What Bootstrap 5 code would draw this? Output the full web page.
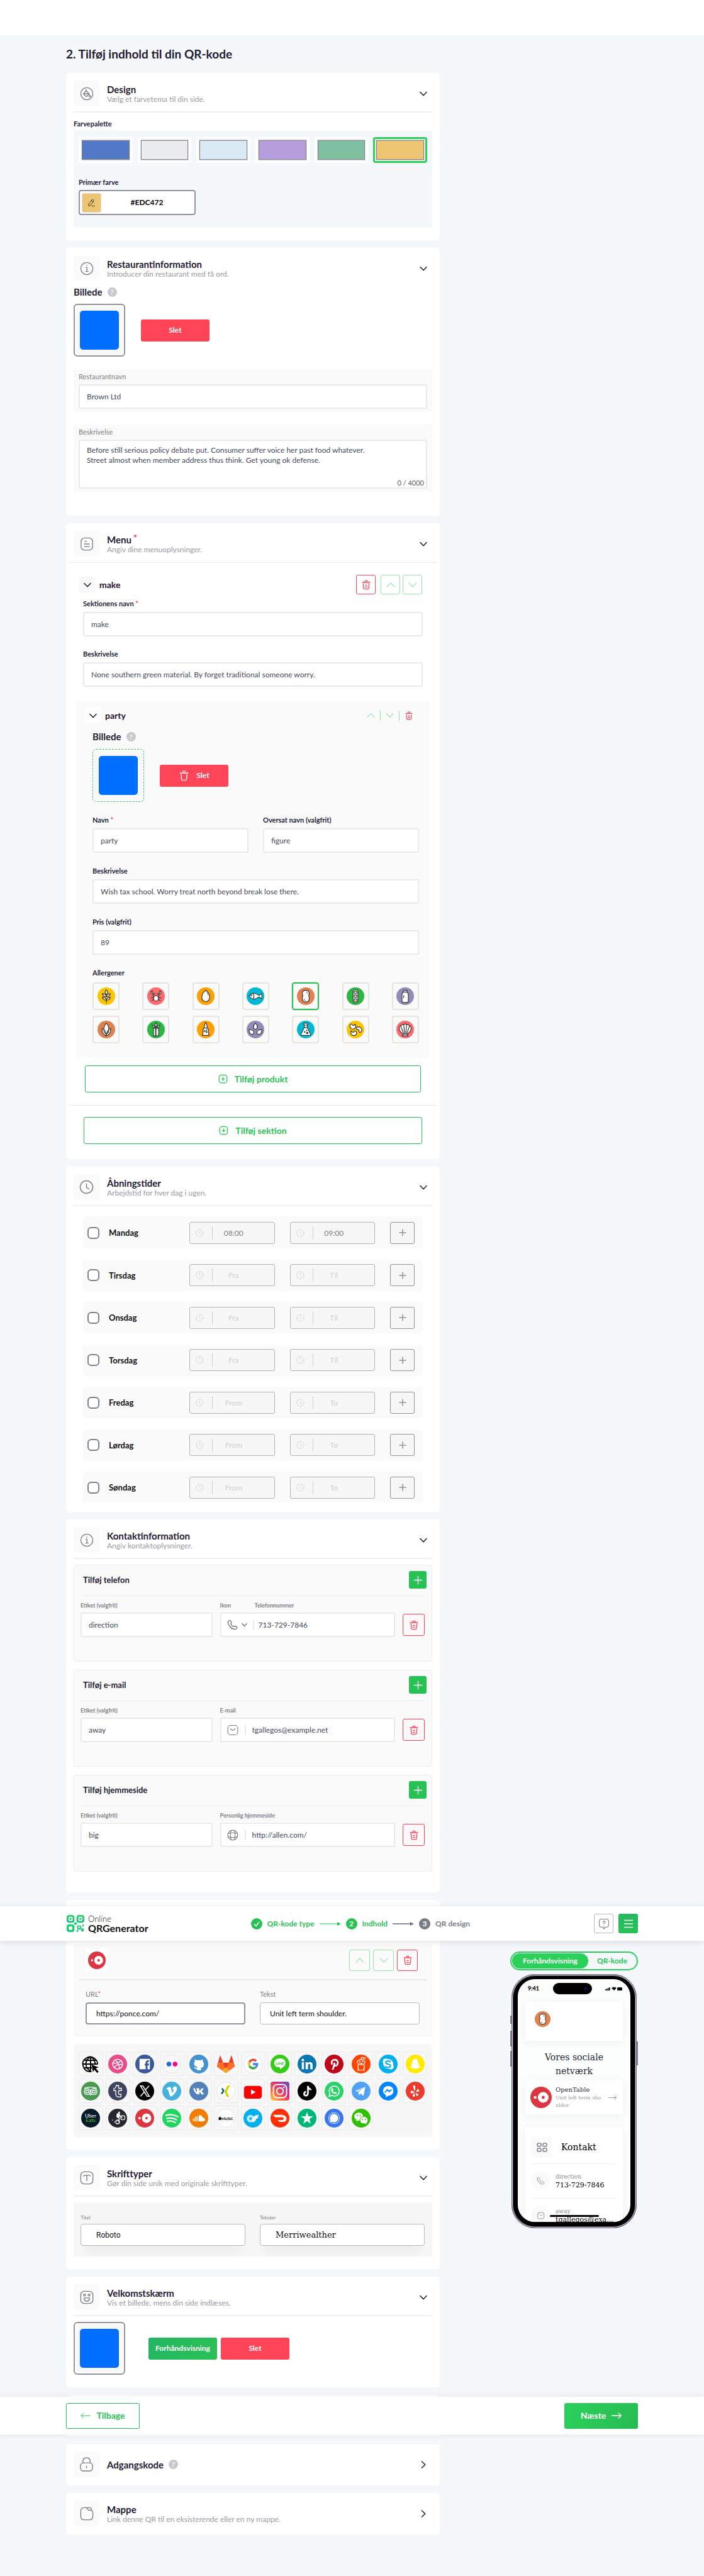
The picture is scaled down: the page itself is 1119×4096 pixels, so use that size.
<!DOCTYPE html>
<html lang="da">
<head>
<meta charset="utf-8">
<meta name="viewport" content="width=device-width, initial-scale=1">
<title>Online QR Generator</title>
<link href="https://cdn.jsdelivr.net/npm/bootstrap@5.3.0/dist/css/bootstrap.min.css" rel="stylesheet">
<style>
:root{--ink:#1f1b33;--grey:#7b8087;--green:#28c254;--bright:#2bcf5a;--red:#ff4457}
body{font-family:Lato,"Open Sans",sans-serif;font-size:11px;line-height:14px;color:var(--ink);background:#f4f8fb}
svg{display:block;flex:none}
.line-icon{fill:none;stroke:currentColor;stroke-width:1.5;stroke-linecap:round;stroke-linejoin:round}
.line-icon.fine{stroke-width:1.1}
.line-icon.bold{stroke-width:2}
.page-wrap{position:relative;min-height:4096px}
.top-strip{height:56px}
.site-width{max-width:909px;margin-inline:auto}
.layout-grid{display:grid;grid-template-columns:minmax(0,594px) 203px;justify-content:space-between}
.page-title{font-size:19px;line-height:24px;font-weight:700;margin:18px 0}
.panel-stack{display:flex;flex-direction:column;gap:12px}
.section-box{background:#fff;border-radius:6px;padding:12px 12px 20px}
.section-box.folded{padding-bottom:13px}
.info-box{padding-bottom:38px}
.menu-box{padding-bottom:24px}
.hours-box{padding-bottom:14px}
.contact-box{padding-bottom:33px}
.links-box{padding-top:70px}
.sec-head{display:flex;align-items:center;gap:12px;height:41px;padding-right:8px}
.sec-icon{width:41px;height:41px;border-radius:4px;background:#fbfbfb;color:var(--grey);display:grid;place-items:center;flex:none}
.sec-title{font-size:15px;line-height:18px;font-weight:700;margin:0}
.sec-title sup{color:#e02437;font-size:14px;top:-4px;margin-left:3px;line-height:1}
.sec-sub{color:#9a9aa4;font-size:12px;margin:0}
.fold-btn{border:0;background:none;padding:0;color:var(--ink);margin-left:auto}
.rule{border:0;opacity:1;margin:8px 0 0;height:2px;background:#f0f0f0}
.rule-wide{border:0;opacity:1;height:1px;background:#e8e8e8;margin:9px -7px 0}
.rule-wide.low{margin-top:20px}
.field-label{display:block;font-weight:700;color:#22243a;line-height:14px;margin:0}
.field-label i{color:var(--red);font-style:normal}
.palette-label{margin-top:11px}
.primary-label{margin-top:24px}
.field-label.soft{font-weight:400;color:var(--grey)}
.field-label.tiny{font-size:9px;line-height:12px;color:var(--grey)}
.field-label.mini{font-size:8px;line-height:12px}
.txt{display:block;width:100%;height:39px;border:2px solid #eaeaea;border-radius:3px;background:#fff;color:#434a5e;padding:0 11px;font-size:12px;outline:0}
.txt.dark-edge{height:35px;border:1px solid #b9b9bd;color:#111;padding:0 15px;border-radius:4px}
.txt.active-edge{border:2px solid #93939d}
textarea.txt{height:78px;padding-top:7px;line-height:16px;resize:none}
.counter{position:absolute;right:13px;bottom:7px;color:#5c6066}
.stack6{display:flex;flex-direction:column;gap:6px}
.stack5{display:flex;flex-direction:column;gap:5px}
.grey-panel{position:relative;background:#fafafa;border-radius:4px;padding:6px 8px 5px;margin-top:19px}
.tint-panel{background:#f4f8fb;border-radius:4px;margin-top:4px;padding:10px 8px 20px}
.swatches{display:grid;grid-template-columns:repeat(6,1fr);gap:8px}
.swatch{height:41px;background:#fff;border:0;border-radius:4px;padding:3px 4px}
.swatch span{display:block;height:100%;border:solid #e6e6ea;border-width:2px 1px}
.swatch b{display:block;height:100%;border:1px solid #808080}
.swatch.picked{border:3px solid var(--bright);padding:0 1px}
.hex-box{width:186px;height:40px;border:2px solid #93939d;border-radius:4px;background:#fff;display:flex;align-items:center;padding:3px;margin-top:5px}
.hex-chip{width:31px;height:31px;border:1px solid #ddd;border-radius:3px;background:#edc472;display:grid;place-items:center;padding:0;color:#222}
.hex-box input{border:0;outline:0;flex:1;min-width:0;text-align:center;font-weight:700;font-size:12px;color:#000;background:none}
.img-title{font-size:15px;line-height:18px;font-weight:700;margin:8px 0 0;display:flex;align-items:center;gap:8px}
.help-dot{width:15px;height:15px;border-radius:50%;background:#c9c8cf;color:#fff;font-size:12px;line-height:15px;text-align:center;display:inline-block;font-weight:400}
.img-row{display:flex;align-items:center;gap:25px;margin-top:10px}
.welcome-row{display:flex;align-items:center;gap:6px;margin-top:9px}
.welcome-row .img-frame{margin-right:31px}
.img-frame{width:82px;height:84px;border:2px solid #93939d;border-radius:6px;background:#f8f8f8;padding:8px;display:grid;box-shadow:inset 0 0 0 2px #fff}
.img-frame span{background:#006fff;border-radius:5px;margin:1px 0}
.img-frame.dashed{border:1px dashed #3cc766;padding:9px}
.pill-btn{width:109px;height:35px;border:0;border-radius:3px;background:var(--red);color:#fff;font-weight:700;font-size:12px;padding:0;display:flex;align-items:center;justify-content:center;gap:11px}
.pill-btn.go{background:linear-gradient(120deg,#25b564,#2bc154)}
.mini-fold{width:25px;height:25px;background:#f8f8f8;border:0;padding:0;display:grid;place-items:center;color:var(--ink)}
.course-bar{display:flex;align-items:center;margin-top:19px;padding:0 16px 0 9px}
.course-fields{padding:8px 15px 0;display:flex;flex-direction:column;gap:21px}
.sq{width:31px;height:31px;border:1px solid #96e3ac;border-radius:3px;background:#fff;color:#96e3ac;padding:0;display:grid;place-items:center}
.sq.del{border-color:var(--red);color:var(--red)}
.sq.tall{width:33px;height:34px;background:#fbfbfb}
.sq.wide{width:35px;height:35px;background:#fdf9fa}
.sq.plain{border-color:#b9b9bd;color:var(--grey)}
.sq.burger{border:0;background:linear-gradient(#27b862,#28c254)}
.item-name{font-size:14px;line-height:18px;font-weight:700;color:#2a1030;margin:0 0 0 7px}
.dish{background:#fafafa;border-radius:4px;margin:22px 4px 0;padding:11px 17px 22px 26px}
.dish-bar{height:25px;margin-left:-12px;padding-right:9px;display:flex;align-items:center}
.dish .img-title{margin-top:12px}
.dish .img-row{margin-top:11px}
.dish-fields{display:flex;flex-direction:column;gap:22px;margin-top:22px}
.ghost{border:0;background:none;padding:0;color:#96e3ac}
.ghost.del{color:var(--red)}
.bar{width:1px;height:16px;background:#8fdfa6}
.allergens{display:flex;flex-wrap:wrap;justify-content:space-between;row-gap:9px;column-gap:36px;margin-top:8px}
.allergens button{width:43px;height:44px;border:2px solid #e6e6de;border-radius:4px;background:#fafafa;padding:0;display:grid;place-items:center}
.allergens button.picked{border-color:var(--green);outline:1px solid #e6e6de}
.wide-btn{height:43px;border:1px solid var(--green);border-radius:3px;background:#fff;color:var(--green);font-size:14px;font-weight:700;display:flex;align-items:center;justify-content:center;gap:11px;padding:0}
.add-dish{display:grid;margin:13px 18px 0}
.add-course{display:grid;margin:18px 16px 0}
.days{display:flex;flex-direction:column;justify-content:space-between;min-height:455px;margin:17px 15px 0}
.day{height:50px;background:#fafafa;border-radius:5px;display:grid;grid-template-columns:138px minmax(0,1fr) minmax(0,1fr) 39px;column-gap:24px;align-items:center;padding:0 13px 0 7px}
.day-name{display:flex;align-items:center;gap:15px;font-size:13px;font-weight:700;color:#111}
.day-name .form-check-input{width:19px;height:19px;border:2px solid #7c828b;border-radius:6px;margin:0;flex:none;background-color:#fff}
.day-time{height:35px;border:1px solid #b4b4b6;border-radius:3px;background:#f7f7f7;color:#cfcfd1;display:flex;align-items:center;padding-left:9px}
.day-time input{border:0;border-left:1px solid #cfcfd1;background:none;height:21px;flex:1;min-width:0;margin-left:13px;padding:0 31px 0 0;text-align:center;color:#7e7e80;font-size:12px}
.day-time input::placeholder{color:#cfcfd1;opacity:1}
.day-add{width:39px;height:35px;border:1px solid #92929a;border-radius:3px;background:#f7f7f7;color:#92929a;padding:0;display:grid;place-items:center}
.contact{border:1px solid #ededed;border-radius:3px;background:#fafafa;padding:9px 11px 38px 10px}
.rule+.contact{margin-top:9px}
.contact+.contact{margin-top:13px}
.contact-top{display:flex;justify-content:space-between;align-items:center;margin-right:-3px;padding-left:4px;height:28px}
.contact-top h3{font-size:13px;line-height:18px;margin:0;font-weight:700}
.add-btn{width:28px;height:28px;border:0;border-radius:3px;background:var(--green);color:#fff;padding:0;display:grid;place-items:center}
.thin-rule{border:0;opacity:1;height:1px;background:#ededed;margin:11px 1px 9px 2px}
.contact-grid{display:grid;grid-template-columns:210fr 279fr 35px;column-gap:12px;align-items:end}
.contact-grid .sq{margin-bottom:2px}
.combo{height:39px;border:2px solid #eaeaea;border-radius:3px;background:#fff;display:flex;align-items:center;color:var(--grey);padding-left:9px}
.combo input{border:0;outline:0;flex:1;min-width:0;height:24px;font-size:12px;color:#434a5e;background:none;padding:0}
.combo .split{width:2px;height:16px;background:#eaeaea;margin:0 10px}
.combo.dial{color:#4b5060}
.combo.dial .split{margin:0 7px 0 9px}
.combo.dial svg+svg{margin-left:6px}
.icon-label{width:55px}
.link-panel{background:#fafafa;border-radius:4px;padding:8px 20px 20px 19px}
.link-bar{display:flex;align-items:center;gap:5px;padding-right:3px}
.link-tile{width:36px;height:36px;background:#fff;border-radius:4px;display:grid;place-items:center;margin-right:auto}
.link-panel .rule{margin:12px -12px 0 -11px;background:#eaeaea}
.link-panel .two-col{margin-top:15px}
.two-col{display:grid;grid-template-columns:1fr 1fr;column-gap:23px}
.social-panel{background:#f7f7f7;border-radius:4px;margin-top:11px;padding:12px 8px 11px}
.socials{display:grid;grid-template-columns:repeat(13,1fr);gap:4px}
.socials button{height:39px;border:1px solid #ececec;border-radius:3px;background:#f7f7f7;padding:0;display:grid;place-items:center}
.font-panel{background:#f7f7f7;border-radius:3px;margin-top:9px;padding:18px 12px 17px 11px}
.font-panel .txt{padding-left:24px;margin-top:4px;box-shadow:0 18px 14px -6px rgba(0,0,0,.04)}
.txt.in-roboto{font-family:Roboto,sans-serif;font-size:12px}
.txt.in-serif{font-family:"DejaVu Serif",serif;font-size:13px}
.nav-strip{position:absolute;left:0;right:0;top:3031px;background:#fff;box-shadow:0 2px 10px rgba(30,40,60,.13)}
.nav-strip .site-width{height:55px;display:flex;align-items:center;padding-left:1px}
.brand{display:flex;align-items:center;gap:6px;color:#111;text-decoration:none}
.brand b{display:block;font-size:16px;line-height:16px}
.brand em{display:block;font-style:normal;font-size:13px;line-height:14px;font-weight:300}
.steps{display:flex;align-items:center;gap:8px;color:var(--green);font-size:12px;font-weight:700;margin:0 auto;padding:0 34px 0 0;list-style:none}
.steps a{color:inherit;text-decoration:none;display:flex;align-items:center;gap:8px}
.steps .later{color:#777c85}
.num{width:18px;height:18px;border-radius:50%;background:var(--green);color:#fff;font-size:12px;line-height:18px;text-align:center;display:grid;place-items:center}
.later .num{background:#777c85}
.foot-strip{position:absolute;left:0;right:0;top:3811px;background:#fff;box-shadow:0 0 9px rgba(30,40,60,.1)}
.foot-strip .site-width{height:60px;display:flex;justify-content:space-between;align-items:center}
.foot-btn{width:117px;height:41px;border:1px solid var(--green);border-radius:3px;background:#fff;color:var(--green);font-size:14px;font-weight:700;display:flex;align-items:center;justify-content:center;gap:9px;padding:0}
.foot-btn.next{border:0;background:linear-gradient(120deg,#2bd15b,#28bb52);color:#fff}
.preview{padding-top:3047px}
.toggle-pill{height:30px;border:2px solid var(--bright);border-radius:15px;display:flex;padding:1px;margin-bottom:6px}
.toggle-pill button{border:0;border-radius:13px;background:none;flex:1;color:var(--green);font-weight:700;font-size:12px;padding:0}
.toggle-pill button.on{background:var(--bright);color:#fff;flex:0 0 121px}
.handset{position:relative;height:404px;margin:0 2px;border:1px solid #6b6076;border-radius:37px;background:#000;padding:7px 9px 9px;box-shadow:inset 0 0 0 1px #d9d4de,inset 0 0 0 2px #4b4157}
.side-key{position:absolute;width:2px;background:#857a90;left:-3px;height:25px}
.side-key.k1{top:65px;height:13px}
.side-key.k2{top:89px}
.side-key.k3{top:121px}
.side-key.k4{top:106px;height:38px;left:auto;right:-3px}
.screen{position:relative;height:100%;border-radius:27px;background:#fcfdfd;overflow:hidden;padding:0 12px;font-family:"DejaVu Serif","Liberation Serif",serif;color:#1f2937}
.status{height:36px;padding:7px 0 0 4px;display:flex;justify-content:space-between;align-items:start;font:900 9px/16px Lato,sans-serif;color:#000}
.island{position:absolute;left:56px;top:6px;width:62px;height:18px;border-radius:9px;background:#000}
.island i{position:absolute;right:7px;top:6px;width:6px;height:6px;border-radius:50%;background:#0b0b45}
.home-bar{position:absolute;left:51px;bottom:8px;width:78px;height:3px;border-radius:2px;background:#000}
.mob-card{background:#fff;box-shadow:0 3px 14px rgba(40,70,60,.06)}
.mob-top{height:62px;padding:15px 0 0 15px}
.mob-title{font-size:14px;line-height:22px;font-weight:400;text-align:center;margin:15px 0 4px}
.mob-link{height:54px;padding:0 10px 0 8px;display:flex;align-items:center;gap:6px}
.mob-link div{width:76px;word-break:break-all}
.mob-link strong{display:block;font-weight:400;font-size:10px;line-height:14px}
.mob-link small{display:block;font-size:8px;line-height:12px;color:#999}
.mob-link .line-icon{margin-left:auto;color:var(--grey)}
.mob-contact{margin-top:20px;padding:15px 9px 30px}
.mob-head{display:flex;align-items:center;gap:14px;padding-bottom:9px;font-size:14px;color:#000}
.mob-square{width:34px;height:34px;border-radius:3px;background:#fafafa;display:grid;place-items:center;color:var(--grey)}
.mob-row{display:flex;align-items:center;gap:8px;padding:11px 0 12px;border-top:1px solid #efefef}
.mob-row span{display:block;font-size:9px;line-height:14px;color:#888}
.mob-row b{display:block;font-weight:400;font-size:11px;line-height:14px;color:#000}
.mob-dot{width:31px;height:31px;border-radius:50%;background:#fafafa;display:grid;place-items:center;color:var(--grey);flex:none}
</style>
</head>
<body>
<svg width="0" height="0" class="position-absolute" aria-hidden="true">
<defs>
<linearGradient id="insta" x1="0" y1="1" x2="1" y2="0"><stop offset="0" stop-color="#fd5"/><stop offset=".3" stop-color="#ff6a3a"/><stop offset=".6" stop-color="#d6307a"/><stop offset="1" stop-color="#5b4fd0"/></linearGradient>
<linearGradient id="mint" x1="0" y1="0" x2="0" y2="1"><stop offset="0" stop-color="#25d366"/><stop offset="1" stop-color="#1ebd8a"/></linearGradient>
<symbol id="i-down" viewBox="0 0 12 12"><path d="M1 3.500 6 8.700 11 3.500"/></symbol>
<symbol id="i-up" viewBox="0 0 12 12"><path d="M1 8.500 6 3.300 11 8.500"/></symbol>
<symbol id="i-right" viewBox="0 0 12 12"><path d="M3.500 1 8.700 6 3.500 11"/></symbol>
<symbol id="i-plus" viewBox="0 0 12 12"><path d="M6 1v10M1 6h10"/></symbol>
<symbol id="i-trash" viewBox="0 0 24 24"><path d="M3 6h18M8.500 5.500 9 3.500Q9.300 2 11 2h2q1.700 0 2 1.500l.5 2M5 9l.8 10.500Q6 22 8.500 22h7q2.500 0 2.700-2.500L19 9M10 12.500h4M9.500 17h5"/></symbol>
<symbol id="i-trash2" viewBox="0 0 24 24"><path d="M3 6h18M9 2h6M5.500 9l.8 10.500Q6.500 22 9 22h6q2.500 0 2.700-2.500L18.500 9"/></symbol>
<symbol id="i-info" viewBox="0 0 24 24"><circle cx="12" cy="12" r="10.500"/><path d="M10.300 10.200H12.200V17M10 17h4.400M12 6.600v.4"/></symbol>
<symbol id="i-clock" viewBox="0 0 24 24"><circle cx="12" cy="12" r="10.500"/><path d="M12 6.500v6.200l4 2.300"/></symbol>
<symbol id="i-drop" viewBox="0 0 24 24"><circle cx="12" cy="12" r="10.500"/><path d="M10.800 5v3M10.800 6.800 15.800 12q.6.7 0 1.300L11.800 16.500q-.9.600-1.700 0L6.500 13q-.6-.7 0-1.400zM6.500 12.300h9.500M17.300 14.500q-2.200 3 0 3t0-3z"/></symbol>
<symbol id="i-doc" viewBox="0 0 24 24"><rect x="2" y="1.500" width="20" height="21" rx="6"/><path d="M8.500 7.500h3M8 12h8.500M8 16.500h8.500"/></symbol>
<symbol id="i-type" viewBox="0 0 24 24"><rect x="1.500" y="1.500" width="21" height="21" rx="6"/><path d="M6.500 9V8.500q0-1 1-1h9q1 0 1 1V9M12 7.500V17"/></symbol>
<symbol id="i-smile" viewBox="0 0 24 24"><rect x="1.500" y="1.500" width="21" height="21" rx="6"/><circle cx="8" cy="8" r="1.700"/><circle cx="16" cy="8" r="1.700"/><path d="M7.300 13h9.400v1.500q-.5 4-4.700 4t-4.700-4z"/></symbol>
<symbol id="i-lock" viewBox="0 0 24 24"><rect x="2" y="9.500" width="20" height="13.500" rx="5"/><path d="M6 9.500V7q0-6 6-6t6 6v2.500M12 15v3"/></symbol>
<symbol id="i-folder" viewBox="0 0 24 24"><path d="M15 6H20.500Q22.500 8 22.500 10v6q0 6.500-6 6.500h-9q-6 0-6-6V7.500q0-6 6-6H17q3 0 3.500 4.500M10 1.500q2 0 3.500 2.500t2.500 2"/></symbol>
<symbol id="i-phone" viewBox="0 0 24 24"><path d="M2 5.500Q2 4 4 2.700 6 1.300 7.300 3L9.500 6.200q.8 1.300-.3 2.500-1.300 1.300-.4 2.600 2 3 4.700 4.500 1.200.6 2.300-.5 1.200-1.200 2.600-.4l3 2q1.500 1.200.3 2.800-2 2.800-4.200 2.500Q11 21.500 6.500 16.500 2 11.500 2 5.500z"/></symbol>
<symbol id="i-mail" viewBox="0 0 24 24"><rect x="1.500" y="2" width="21" height="20" rx="6"/><path d="M7 9l3.300 2.600q1.700 1.200 3.400 0L17 9"/></symbol>
<symbol id="i-globe" viewBox="0 0 24 24"><circle cx="12" cy="12" r="10.500"/><path d="M8.500 2.200Q5.500 12 8.500 21.800M15.500 2.200q3 9.800 0 19.600M2.200 8.500q9.800-3 19.600 0M2.200 15.500q9.800 3 19.600 0"/></symbol>
<symbol id="i-add" viewBox="0 0 24 24"><rect x="2" y="2" width="20" height="20" rx="6"/><path d="M12 8v8M8 12h8"/></symbol>
<symbol id="i-pen" viewBox="0 0 24 24"><path d="M4 15.500 12.500 4q2-2.500 4.500-.7t.8 4.200L9.500 19Q6 22.500 3 21q0-3 1-5.500M11.500 5.500q1 3 4.800 4M13 21.500h8"/></symbol>
<symbol id="i-arrow" viewBox="0 0 24 14"><path d="M1 7h22M17 1l6 6-6 6"/></symbol>
<symbol id="i-back" viewBox="0 0 24 14"><path d="M23 7H1M7 1 1 7l6 6"/></symbol>

<symbol id="a-gluten" viewBox="0 0 36 36"><circle cx="18" cy="18" r="18" fill="#fdc500"/><g fill="#fff" stroke="#333" stroke-width="1.500"><path d="M18 5q-5 5 0 10 5-5 0-10zM10 13q1 6 8 6-1-6-8-6zM26 13q-1 6-8 6 1-6 8-6zM10 20q1 6 8 6-1-6-8-6zM26 20q-1 6-8 6 1-6 8-6z"/><path d="M18 24v8"/></g></symbol>
<symbol id="a-crab" viewBox="0 0 36 36"><circle cx="18" cy="18" r="18" fill="#ff6b6b"/><g fill="#fff" stroke="#333" stroke-width="1.500"><path d="M10 7q-4 3-1 6t6 0l-4-1zM26 7q4 3 1 6t-6 0l4-1z"/><path d="M11 15l3 4M25 15l-3 4M13 21H8M23 21h5M14 24l-5 3M22 24l5 3" fill="none"/><ellipse cx="18" cy="22.500" rx="5" ry="5.500"/></g></symbol>
<symbol id="a-egg" viewBox="0 0 36 36"><circle cx="18" cy="18" r="18" fill="#ff9f00"/><path d="M18 6q8 5 8 14t-8 9q-8 0-8-9T18 6z" fill="#fff" stroke="#333" stroke-width="1.500"/><path d="M20 10q3 2 3 6" fill="none" stroke="#333"/></symbol>
<symbol id="a-fish" viewBox="0 0 36 36"><circle cx="18" cy="18" r="18" fill="#00b8d4"/><path d="M5 18q9-11 20-1.500l6-3.500v10l-6-3.500Q14 29 5 18z" fill="#fff" stroke="#333" stroke-width="1.500"/><path d="M13 13q4 5 0 10" fill="none" stroke="#333" stroke-width="1.500"/><circle cx="9.500" cy="17" r="1.200"/></symbol>
<symbol id="a-peanut" viewBox="0 0 36 36"><circle cx="18" cy="18" r="18" fill="#e0814e"/><path d="M18 6q7 0 7 6 0 3-1 5 2 4 1 8-2 5-7 5t-7-5q-1-4 1-8-1-2-1-5 0-6 7-6z" fill="#fff" stroke="#333" stroke-width="1.500"/><path d="M19 9q3 1 3 4M14 23q0 4 4 4" fill="none" stroke="#333"/></symbol>
<symbol id="a-pea" viewBox="0 0 36 36"><circle cx="18" cy="18" r="18" fill="#2bb741"/><g fill="#fff" stroke="#333" stroke-width="1.500"><rect x="13" y="4.500" width="10" height="27" rx="5"/><circle cx="18" cy="10" r="2.800"/><circle cx="18" cy="18" r="2.800"/><circle cx="18" cy="26" r="2.800"/></g></symbol>
<symbol id="a-milk" viewBox="0 0 36 36"><circle cx="18" cy="18" r="18" fill="#938bb8"/><path d="M14 6h8v4q2.500 2 2.500 5v13q0 3-3 3h-7q-3 0-3-3V15q0-3 2.500-5zM14 9.500h8M15 16v6" fill="#fff" stroke="#333" stroke-width="1.500"/></symbol>
<symbol id="a-corn" viewBox="0 0 36 36"><circle cx="18" cy="18" r="18" fill="#e0814e"/><g fill="#fff" stroke="#333" stroke-width="1.500"><path d="M18 5q5 5 5 13t-5 9q-5-1-5-9t5-13zM9 16q8 2 9 15-9-3-9-15zM27 16q-8 2-9 15 9-3 9-15z"/></g></symbol>
<symbol id="a-celery" viewBox="0 0 36 36"><circle cx="18" cy="18" r="18" fill="#2bb741"/><g fill="#fff" stroke="#333" stroke-width="1.500"><path d="M18 4q-4 4 0 9 4-5 0-9zM10 9q0 5 6 6-1-5-6-6zM26 9q0 5-6 6 1-5 6-6zM13 16q-1 8 0 15h4V14zM23 16q1 8 0 15h-6V14z"/><path d="M18 14v17"/></g></symbol>
<symbol id="a-mustard" viewBox="0 0 36 36"><circle cx="18" cy="18" r="18" fill="#ff9f00"/><path d="M17 4h2l2 8v3h-6v-3zM14 15h8q3 4 1 8l2 7H11l2-7q-2-4 1-8z" fill="#fff" stroke="#333" stroke-width="1.500"/><circle cx="16" cy="21" r="1.500"/><circle cx="20" cy="19" r="1.200"/><circle cx="19.500" cy="23" r="1.500"/></symbol>
<symbol id="a-sesame" viewBox="0 0 36 36"><circle cx="18" cy="18" r="18" fill="#938bb8"/><g fill="#fff" stroke="#333" stroke-width="1.500"><path d="M18 5q6 6 3 11-3 3-6 0-3-5 3-11zM5 18q8 0 10 5 0 5-4 5-6 0-6-10zM31 18q-8 0-10 5 0 5 4 5 6 0 6-10z"/></g></symbol>
<symbol id="a-flask" viewBox="0 0 36 36"><circle cx="18" cy="18" r="18" fill="#00b8d4"/><path d="M14 5h8v3h-1v6l7 14q0 2-2 2H10q-2 0-2-2l7-14V8h-1zM15 9h6M15 14h6" fill="#fff" stroke="#333" stroke-width="1.500"/><circle cx="16" cy="23" r="1.400"/><circle cx="20" cy="20" r="1.300"/><circle cx="21" cy="25" r="2"/></symbol>
<symbol id="a-soy" viewBox="0 0 36 36"><circle cx="18" cy="18" r="18" fill="#fdc500"/><g fill="#fff" stroke="#333" stroke-width="1.500"><path d="M8 7q-3 4 0 8t8 1q5-5 1-9-2 4-5 2-1-3-4-2zM20 14q-1 4 4 4 2 0 1 4 2 4 5 0 3-5-2-8-4-3-8 0zM9 21q-2 5 2 8t8 0q3-4 0-7-3-3-4 1-3 2-6-2z"/></g></symbol>
<symbol id="a-shell" viewBox="0 0 36 36"><circle cx="18" cy="18" r="18" fill="#ff6b6b"/><path d="M14 28Q4 20 6 13q5-6 12-6t12 6q2 7-8 15l2 3H12zM15 27 9 11M17 27l-2-19M19 27l2-19M21 27l6-16M13 28h10" fill="#fff" stroke="#333" stroke-width="1.500"/></symbol>

<symbol id="s-web" viewBox="0 0 40 40"><g fill="none" stroke="#000" stroke-width="2.500"><path d="M22 36q-14 1-17.500-11T9 9q7-7 16-3t10 14M20 4.500v31M4 20h31M7 12h26M7 28h16M19 5q-9 6-9 15t10 15M21 5q8 5 9 16"/></g><path d="M22 21l15 6-6 2 6 7-3 3-6-7-3 5z"/></symbol>
<symbol id="s-dribbble" viewBox="0 0 40 40"><circle cx="20" cy="20" r="20" fill="#ea4c89"/><g fill="none" stroke="#fff" stroke-width="2"><circle cx="20" cy="20" r="10.500"/><path d="M15 11q8 8 9 18M10 18q12 1 17-5.500M13 27q5-8 17.500-6"/></g></symbol>
<symbol id="s-facebook" viewBox="0 0 40 40"><circle cx="20" cy="20" r="20" fill="#3b5998"/><path d="M10 9h20q1 0 1 1v20q0 1-1 1h-4v-8h3v-4h-3v-2q0-2 3-2v-3q-7-1-7 5v2h-2v4h2v8H10q-1 0-1-1V10q0-1 1-1z" fill="#fff"/></symbol>
<symbol id="s-flickr" viewBox="0 0 40 40"><circle cx="20" cy="20" r="19.500" fill="#f8f8fa" stroke="#ddd"/><circle cx="14" cy="20" r="5" fill="#1f69e0"/><circle cx="27" cy="20" r="5" fill="#ff0084"/></symbol>
<symbol id="s-github" viewBox="0 0 40 40"><circle cx="20" cy="20" r="20" fill="#4493d0"/><path d="M12 10l4 2q4-1 8 0l4-2q1 2 .5 4.500 3 3 2 8-1 5-6.500 5.500 1 1 1 4v1h-9v-3q-5 1-6-4l3 1q1 2 3 1l1-2q-6-1-7-6-.5-4 1.500-5.500Q11 12 12 10z" fill="#fff"/></symbol>
<symbol id="s-gitlab" viewBox="0 0 40 40"><path d="M20 39 1 25 8 1l6 16h12L32 1l7 24z" fill="#e24329"/><path d="M20 39 1 25l3-8h10zM20 39l19-14-3-8H26z" fill="#fc6d26"/><path d="M20 39 12 33l8-7 8 7z" fill="#fca326"/></symbol>
<symbol id="s-google" viewBox="0 0 40 40"><circle cx="20" cy="20" r="19.500" fill="#fff" stroke="#ddd"/><g fill="none" stroke-width="4.500"><path d="M27 13.500Q23 10 18.500 11 14 12.500 12.500 16" stroke="#ea4335"/><path d="M12.500 16Q11 20 12.500 24" stroke="#fbbc05"/><path d="M12.500 24q3 5.500 9 5 3-.5 5-2.500" stroke="#34a853"/><path d="M26.500 26.500Q29 24 29 20h-9" stroke="#4285f4"/></g></symbol>
<symbol id="s-line" viewBox="0 0 40 40"><circle cx="20" cy="20" r="20" fill="#36cb17"/><path d="M20 8q12 0 12 10 0 6-12 13v-4Q8 27 8 18 8 8 20 8z" fill="#fff"/><text x="20" y="21" font-size="8" font-weight="900" text-anchor="middle" fill="#36cb17">LINE</text></symbol>
<symbol id="s-linkedin" viewBox="0 0 40 40"><circle cx="20" cy="20" r="20" fill="#0a77b5"/><path d="M9 16h4.500v15H9zM17 16h4v2q5-5 10 0 1 2 1 13h-5v-8q0-4-3-3-2 0-2 3v8h-5z" fill="#fff"/><circle cx="11.200" cy="11.500" r="2.700" fill="#fff"/></symbol>
<symbol id="s-pinterest" viewBox="0 0 40 40"><circle cx="20" cy="20" r="20" fill="#bd081c"/><path d="M17 32q3-7 4-15M16 21q-4-8 4-10 7-1 8 6-1 9-8 5" fill="none" stroke="#fff" stroke-width="3.500"/></symbol>
<symbol id="s-reddit" viewBox="0 0 40 40"><circle cx="20" cy="20" r="20" fill="#ff4500"/><g fill="none" stroke="#fff" stroke-width="1.600"><ellipse cx="20" cy="16" rx="8" ry="5.500"/><path d="M20 10l1-4 5 1M14 21q-2 6 1 12h10q3-6 1-12M16 33h-4M24 33h4M17 18q3 2 6 0"/><circle cx="27" cy="7.500" r="1.500"/></g><circle cx="17" cy="15" r="1.500" fill="#fff"/><circle cx="23" cy="15" r="1.500" fill="#fff"/></symbol>
<symbol id="s-skype" viewBox="0 0 40 40"><circle cx="20" cy="20" r="20" fill="#00aff0"/><path d="M10 10q3-3 7-1 14-1 14 14 2 6-3 8-3 1-5-1-13 0-14-13-1-4 1-7z" fill="#fff"/><path d="M25 16q-2-3-6-2.500t-4 3 4 3.500q6 1 6 4t-5 3-6-3" fill="none" stroke="#00aff0" stroke-width="2.800"/></symbol>
<symbol id="s-snap" viewBox="0 0 40 40"><circle cx="20" cy="20" r="20" fill="#ffea00"/><path d="M20 9q6 0 6 6v4l3 0-2 3q1 3 4 4-2 2-4 2-1 2-4 1-3 3-6 0-3 1-4-1-2 0-4-2 3-1 4-4l-2-3 3 0v-4q0-6 6-6z" fill="#fff"/></symbol>
<symbol id="s-trip" viewBox="0 0 40 40"><circle cx="20" cy="20" r="20" fill="#489a52"/><g fill="none" stroke="#fff" stroke-width="1.800"><circle cx="13" cy="21" r="6.500"/><circle cx="27" cy="21" r="6.500"/><circle cx="13" cy="21" r="3"/><circle cx="27" cy="21" r="3"/><path d="M7 14q13-5 26 0M18 26l2 2 2-2"/></g></symbol>
<symbol id="s-tumblr" viewBox="0 0 40 40"><circle cx="20" cy="20" r="20" fill="#3d4460"/><path d="M17 8h5v6h6v5h-6v6q0 3 5 1.500V32q-10 2-11-5v-8h-4v-4q4-1 5-7z" fill="none" stroke="#fff" stroke-width="1.800"/></symbol>
<symbol id="s-x" viewBox="0 0 40 40"><circle cx="20" cy="20" r="20"/><path d="M11 9h5l14 22h-5zM29 9 21 18M19 22l-8 9" fill="none" stroke="#fff" stroke-width="2"/></symbol>
<symbol id="s-vimeo" viewBox="0 0 40 40"><circle cx="20" cy="20" r="20" fill="#45b1dc"/><path d="M8 15l6-4q4-1 5 5l1.500 8q2-2 3.500-6 0-3-3-2 2-6 7-6 5 1 2 9-4 8-10 12-4 1-5-4l-3-11-2 1z" fill="#fff"/></symbol>
<symbol id="s-vk" viewBox="0 0 40 40"><circle cx="20" cy="20" r="20" fill="#5181b8"/><path d="M8 14h4q1 6 4 8v-5l-2-3h7v6q3-2 5-6h4q-1 4-4 6.500 3 2 5 6.500h-5q-2-4-5-5v5Q12 28 8 14z" fill="#fff"/></symbol>
<symbol id="s-xing" viewBox="0 0 40 40"><circle cx="20" cy="20" r="19.500" fill="#fbfbfb" stroke="#ddd"/><path d="M10 14h4l3 5-4 7H9l4-7z" fill="#0a6567"/><path d="M24 8h5l-7 13 5 11h-5l-5-11z" fill="#d4d600"/></symbol>
<symbol id="s-youtube" viewBox="0 0 40 40"><rect x="1" y="9" width="38" height="27" rx="6" fill="red"/><path d="M16 16.500l10 5.500-10 5.500z" fill="#fff"/></symbol>
<symbol id="s-instagram" viewBox="0 0 40 40"><rect width="40" height="40" rx="5" fill="url(#insta)"/><g fill="none" stroke="#fff" stroke-width="2.600"><rect x="6" y="6" width="28" height="28" rx="8"/><circle cx="20" cy="20" r="7"/></g><circle cx="28" cy="12" r="1.800" fill="#fff"/></symbol>
<symbol id="s-tiktok" viewBox="0 0 40 40"><circle cx="20" cy="20" r="20"/><path d="M22 9v16q-1 5-5 4.500-4-1-3-5 1-3 4-3M22 10q1 6 7 6.500" fill="none" stroke="#fff" stroke-width="3.500"/></symbol>
<symbol id="s-whatsapp" viewBox="0 0 40 40"><circle cx="20" cy="20" r="20" fill="#29d367"/><path d="M9.500 31l1.500-6Q8 18 12 13q5-5 12-3 7 3 7 10t-7 10q-5 1-8-1z" fill="none" stroke="#fff" stroke-width="2.200"/><path d="M15 14l2.500 0 1 3-1.500 2q1.500 3 4.500 4l1.500-1.500 3 1.500q0 3-3.500 3-7-1-9-8 0-3 1.500-4z" fill="#fff"/></symbol>
<symbol id="s-telegram" viewBox="0 0 40 40"><circle cx="20" cy="20" r="20" fill="#50a2f5"/><path d="M7 20 29 11l-4 19-7-5-3 4-1-7 11-8-13 7z" fill="#fff"/></symbol>
<symbol id="s-messenger" viewBox="0 0 40 40"><circle cx="20" cy="20" r="20" fill="#0084ff"/><path d="M20 9q11 1 11 10.500T20 30l-5 3v-5q-6-3-6-9 1-9 11-10z" fill="#fff"/><path d="M13 23l5-6 4 4 5-4" fill="none" stroke="#0084ff" stroke-width="2.500"/></symbol>
<symbol id="s-yelp" viewBox="0 0 40 40"><circle cx="20" cy="20" r="20" fill="#eb3b2e"/><path d="M15 9q4-2 5 0v9q-1 2-2 0zM11 19l7 2q1 1 0 2l-7 2q-1-3 0-6zM19 25v7q-3 0-5-2l4-6zM22 24l5 3-2 4q-2 0-4-5zM22 21l3-6q3 2 4 5l-6 2z" fill="#fff"/></symbol>
<symbol id="s-uber" viewBox="0 0 40 40"><circle cx="20" cy="20" r="20" fill="#041d28"/><text x="20" y="18.500" font-size="11" text-anchor="middle" fill="#fff">Uber</text><text x="20" y="28.500" font-size="11" text-anchor="middle" fill="#5fc12f">Eats</text></symbol>
<symbol id="s-postmates" viewBox="0 0 40 40"><circle cx="20" cy="20" r="20" fill="#25272f"/><g fill="none" stroke="#fff" stroke-width="1.700"><circle cx="20" cy="28" r="4"/><circle cx="31" cy="19" r="4.500"/><path d="M17 15h8l5 4M21 10l-1 8 4 3-3 7"/></g><path d="M18 10h7l-1 9h-6z" fill="#fff"/><circle cx="23" cy="8" r="2" fill="#fff"/><circle cx="9" cy="24" r="1" fill="#fff"/><circle cx="13" cy="28" r="1" fill="#fff"/></symbol>
<symbol id="s-opentable" viewBox="0 0 40 40"><circle cx="20" cy="20" r="20" fill="#da3743"/><circle cx="24" cy="20" r="10" fill="#fff"/><circle cx="24" cy="20" r="2.800" fill="#da3743"/><circle cx="9" cy="20" r="2.600" fill="#fff"/></symbol>
<symbol id="s-spotify" viewBox="0 0 40 40"><circle cx="20" cy="20" r="20" fill="#1ed760"/><path d="M8 14q13-4 25 3M10 20.500q11-3 20 3M11 26.500q9-2 16 2.500" fill="none" stroke="#fff" stroke-width="3.200" stroke-linecap="round"/></symbol>
<symbol id="s-soundcloud" viewBox="0 0 40 40"><circle cx="20" cy="20" r="20" fill="#f27b00"/><path d="M20 14q7-2 8 5 5 0 5 4t-4 4h-9z" fill="#fff"/><path d="M18 15v12M15.500 17v10M13 16v11M10.500 20v7M8 21v5" stroke="#fff" stroke-width="1.500"/></symbol>
<symbol id="s-music" viewBox="0 0 40 40"><circle cx="20" cy="20" r="19.500" fill="#fff" stroke="#ddd"/><path d="M7 17.500q2 0 3 .5-1 2 .5 3.500-1 3-3 2.500-2 .5-3-2-.5-4 2.500-4.500zM7.500 17q0-1.500 1.500-2 0 1.500-1.500 2z"/><text x="23" y="23.500" font-size="8" font-weight="700" text-anchor="middle">MUSIC</text></symbol>
<symbol id="s-onlyfans" viewBox="0 0 40 40"><circle cx="20" cy="20" r="20" fill="#00aff0"/><circle cx="15" cy="21" r="8" fill="#bfeafb"/><circle cx="15" cy="21" r="2.800" fill="#00aff0"/><path d="M19 24q2-12 14-11-1 3-5 3.500l4 .5q-1 4-5 4-1 7-8 8z" fill="#fff"/></symbol>
<symbol id="s-doordash" viewBox="0 0 40 40"><circle cx="20" cy="20" r="20" fill="#ff3008"/><path d="M5 13h20q8 1 9 8-1 7-8 7h-7l-4-4h10q3 0 3-3t-3-3H10z" fill="#fff"/></symbol>
<symbol id="s-trust" viewBox="0 0 40 40"><circle cx="20" cy="20" r="20" fill="#00b67a"/><path d="M20 7l3 9h10l-8 6 3 10-8-6-8 6 3-10-8-6h10z" fill="#fff"/></symbol>
<symbol id="s-signal" viewBox="0 0 40 40"><circle cx="20" cy="20" r="20" fill="#3a76f0"/><path d="M20 11a9 9 0 1 1-4.500 16.800L11 29l1.300-4.500A9 9 0 0 1 20 11z" fill="#fff"/><circle cx="20" cy="20" r="11.500" fill="none" stroke="#fff" stroke-width="1.400" stroke-dasharray="3 1"/></symbol>
<symbol id="s-wechat" viewBox="0 0 40 40"><circle cx="20" cy="20" r="20" fill="#2dc100"/><path d="M15 8q9 1 9 8.500Q17 17 16.500 25L9 26l1-3Q5 20 5.500 15.500 7 9 15 8zM26 17q8 1 8 7.500 0 4-3 5.500l1 3-4-2q-9 1-10-6.500Q18 18 26 17z" fill="#fff"/><g fill="#2dc100"><circle cx="12" cy="14" r="1.500"/><circle cx="18" cy="14" r="1.500"/><circle cx="23" cy="23" r="1.300"/><circle cx="29" cy="23" r="1.300"/></g></symbol>
</defs>
</svg>

<div class="page-wrap">
<div class="top-strip bg-white"></div>
<div class="site-width layout-grid">
<main>
<h1 class="page-title">2. Tilføj indhold til din QR-kode</h1>
<div class="panel-stack">

<section class="section-box">
  <div class="sec-head"><span class="sec-icon"><svg class="line-icon" width="22" height="22"><use href="#i-drop"/></svg></span><div><h2 class="sec-title">Design</h2><p class="sec-sub">Vælg et farvetema til din side.</p></div><button class="fold-btn" aria-label="Fold"><svg class="line-icon" width="12" height="12"><use href="#i-down"/></svg></button></div>
  <hr class="rule">
  <div class="field-label palette-label">Farvepalette</div>
  <div class="tint-panel">
    <div class="swatches" id="swatches"></div>
    <label class="field-label primary-label" for="hex">Primær farve</label>
    <div class="hex-box"><button class="hex-chip" aria-label="Vælg farve"><svg class="line-icon" width="13" height="13"><use href="#i-pen"/></svg></button><input id="hex" value="#EDC472"></div>
  </div>
</section>

<section class="section-box info-box">
  <div class="sec-head"><span class="sec-icon"><svg class="line-icon" width="22" height="22"><use href="#i-info"/></svg></span><div><h2 class="sec-title">Restaurantinformation</h2><p class="sec-sub">Introducer din restaurant med få ord.</p></div><button class="fold-btn" aria-label="Fold"><svg class="line-icon" width="12" height="12"><use href="#i-down"/></svg></button></div>
  <h3 class="img-title">Billede <span class="help-dot">?</span></h3>
  <div class="img-row"><div class="img-frame"><span></span></div><button class="pill-btn">Slet</button></div>
  <div class="grey-panel stack5"><label class="field-label soft" for="rname">Restaurantnavn</label><input class="txt" id="rname" value="Brown Ltd"></div>
  <div class="grey-panel stack5"><label class="field-label soft" for="rdesc">Beskrivelse</label>
    <textarea class="txt" id="rdesc">Before still serious policy debate put. Consumer suffer voice her past food whatever.
Street almost when member address thus think. Get young ok defense.</textarea>
    <span class="counter">0 / 4000</span></div>
</section>

<section class="section-box menu-box">
  <div class="sec-head"><span class="sec-icon"><svg class="line-icon" width="22" height="22"><use href="#i-doc"/></svg></span><div><h2 class="sec-title">Menu<sup>*</sup></h2><p class="sec-sub">Angiv dine menuoplysninger.</p></div><button class="fold-btn" aria-label="Fold"><svg class="line-icon" width="12" height="12"><use href="#i-down"/></svg></button></div>
  <hr class="rule-wide">
  <div class="course-bar">
    <button class="mini-fold" aria-label="Fold"><svg class="line-icon" width="12" height="12"><use href="#i-down"/></svg></button><h3 class="item-name">make</h3>
    <button class="sq del ms-auto" aria-label="Slet"><svg class="line-icon bold" width="16" height="16"><use href="#i-trash"/></svg></button>
    <button class="sq ms-2" aria-label="Op"><svg class="line-icon fine" width="14" height="14"><use href="#i-up"/></svg></button>
    <button class="sq ms-1" aria-label="Ned"><svg class="line-icon fine" width="14" height="14"><use href="#i-down"/></svg></button>
  </div>
  <div class="course-fields">
    <div class="stack6"><label class="field-label" for="sname">Sektionens navn <i>*</i></label><input class="txt" id="sname" value="make"></div>
    <div class="stack6"><label class="field-label" for="sdesc">Beskrivelse</label><input class="txt" id="sdesc" value="None southern green material. By forget traditional someone worry."></div>
  </div>
  <div class="dish">
    <div class="dish-bar"><button class="mini-fold bg-white" aria-label="Fold"><svg class="line-icon" width="12" height="12"><use href="#i-down"/></svg></button><h3 class="item-name">party</h3>
      <div class="ms-auto d-flex align-items-center gap-2"><button class="ghost" aria-label="Op"><svg class="line-icon fine" width="13" height="13"><use href="#i-up"/></svg></button><span class="bar"></span><button class="ghost" aria-label="Ned"><svg class="line-icon fine" width="13" height="13"><use href="#i-down"/></svg></button><span class="bar"></span><button class="ghost del" aria-label="Slet"><svg class="line-icon bold" width="14" height="14"><use href="#i-trash"/></svg></button></div></div>
    <h3 class="img-title">Billede <span class="help-dot">?</span></h3>
    <div class="img-row"><div class="img-frame dashed"><span></span></div><button class="pill-btn"><svg class="line-icon bold" width="17" height="17"><use href="#i-trash2"/></svg>Slet</button></div>
    <div class="dish-fields">
      <div class="two-col"><div class="stack6"><label class="field-label" for="pn">Navn <i>*</i></label><input class="txt" id="pn" value="party"></div><div class="stack6"><label class="field-label" for="po">Oversat navn (valgfrit)</label><input class="txt" id="po" value="figure"></div></div>
      <div class="stack6"><label class="field-label" for="pd">Beskrivelse</label><input class="txt" id="pd" value="Wish tax school. Worry treat north beyond break lose there."></div>
      <div class="stack6"><label class="field-label" for="pp">Pris (valgfrit)</label><input class="txt" id="pp" value="89"></div>
      <div><div class="field-label">Allergener</div><div class="allergens" id="allergens"></div></div>
    </div>
  </div>
  <div class="add-dish"><button class="wide-btn"><svg class="line-icon bold" width="15" height="15"><use href="#i-add"/></svg>Tilføj produkt</button></div>
  <hr class="rule-wide low">
  <div class="add-course"><button class="wide-btn"><svg class="line-icon bold" width="15" height="15"><use href="#i-add"/></svg>Tilføj sektion</button></div>
</section>

<section class="section-box hours-box">
  <div class="sec-head"><span class="sec-icon"><svg class="line-icon" width="23" height="23"><use href="#i-clock"/></svg></span><div><h2 class="sec-title">Åbningstider</h2><p class="sec-sub">Arbejdstid for hver dag i ugen.</p></div><button class="fold-btn" aria-label="Fold"><svg class="line-icon" width="12" height="12"><use href="#i-down"/></svg></button></div>
  <hr class="rule">
  <div class="days" id="days"></div>
</section>

<section class="section-box contact-box">
  <div class="sec-head"><span class="sec-icon"><svg class="line-icon" width="22" height="22"><use href="#i-info"/></svg></span><div><h2 class="sec-title">Kontaktinformation</h2><p class="sec-sub">Angiv kontaktoplysninger.</p></div><button class="fold-btn" aria-label="Fold"><svg class="line-icon" width="12" height="12"><use href="#i-down"/></svg></button></div>
  <hr class="rule">
  <div class="contact">
    <div class="contact-top"><h3>Tilføj telefon</h3><button class="add-btn" aria-label="Tilføj"><svg class="line-icon fine" width="15" height="15"><use href="#i-plus"/></svg></button></div>
    <hr class="thin-rule">
    <div class="contact-grid"><div class="stack5"><label class="field-label tiny" for="t1">Etiket (valgfrit)</label><input class="txt" id="t1" value="direction"></div>
      <div class="stack5"><div class="d-flex"><span class="field-label tiny icon-label">Ikon</span><label class="field-label tiny" for="t2">Telefonnummer</label></div><div class="combo dial"><svg class="line-icon" width="17" height="17"><use href="#i-phone"/></svg><svg class="line-icon" width="9" height="9"><use href="#i-down"/></svg><span class="split"></span><input id="t2" value="713-729-7846"></div></div>
      <button class="sq wide del" aria-label="Slet"><svg class="line-icon bold" width="16" height="16"><use href="#i-trash"/></svg></button></div>
  </div>
  <div class="contact">
    <div class="contact-top"><h3>Tilføj e-mail</h3><button class="add-btn" aria-label="Tilføj"><svg class="line-icon fine" width="15" height="15"><use href="#i-plus"/></svg></button></div>
    <hr class="thin-rule">
    <div class="contact-grid"><div class="stack5"><label class="field-label tiny" for="e1">Etiket (valgfrit)</label><input class="txt" id="e1" value="away"></div>
      <div class="stack5"><label class="field-label tiny" for="e2">E-mail</label><div class="combo"><svg class="line-icon" width="18" height="18"><use href="#i-mail"/></svg><span class="split"></span><input id="e2" value="tgallegos@example.net"></div></div>
      <button class="sq wide del" aria-label="Slet"><svg class="line-icon bold" width="16" height="16"><use href="#i-trash"/></svg></button></div>
  </div>
  <div class="contact">
    <div class="contact-top"><h3>Tilføj hjemmeside</h3><button class="add-btn" aria-label="Tilføj"><svg class="line-icon fine" width="15" height="15"><use href="#i-plus"/></svg></button></div>
    <hr class="thin-rule">
    <div class="contact-grid"><div class="stack5"><label class="field-label tiny" for="w1">Etiket (valgfrit)</label><input class="txt" id="w1" value="big"></div>
      <div class="stack5"><label class="field-label tiny" for="w2">Personlig hjemmeside</label><div class="combo"><svg class="line-icon" width="18" height="18"><use href="#i-globe"/></svg><span class="split"></span><input id="w2" value="http://allen.com/"></div></div>
      <button class="sq wide del" aria-label="Slet"><svg class="line-icon bold" width="16" height="16"><use href="#i-trash"/></svg></button></div>
  </div>
</section>

<section class="section-box links-box">
  <div class="link-panel">
    <div class="link-bar"><span class="link-tile"><svg width="28" height="28"><use href="#s-opentable"/></svg></span>
      <button class="sq tall" aria-label="Op"><svg class="line-icon fine" width="14" height="14"><use href="#i-up"/></svg></button><button class="sq tall" aria-label="Ned"><svg class="line-icon fine" width="14" height="14"><use href="#i-down"/></svg></button><button class="sq tall del" aria-label="Slet"><svg class="line-icon bold" width="16" height="16"><use href="#i-trash"/></svg></button></div>
    <hr class="rule">
    <div class="two-col"><div class="stack6"><label class="field-label soft" for="u1">URL<i>*</i></label><input class="txt dark-edge active-edge" id="u1" value="https://ponce.com/"></div><div class="stack6"><label class="field-label soft" for="u2">Tekst</label><input class="txt dark-edge" id="u2" value="Unit left term shoulder."></div></div>
  </div>
  <div class="social-panel"><div class="socials" id="socials"></div></div>
</section>

<section class="section-box">
  <div class="sec-head"><span class="sec-icon"><svg class="line-icon" width="22" height="22"><use href="#i-type"/></svg></span><div><h2 class="sec-title">Skrifttyper</h2><p class="sec-sub">Gør din side unik med originale skrifttyper.</p></div><button class="fold-btn" aria-label="Fold"><svg class="line-icon" width="12" height="12"><use href="#i-down"/></svg></button></div>
  <hr class="rule">
  <div class="font-panel two-col">
    <div><label class="field-label soft mini" for="f1">Titel</label><input class="txt dark-edge in-roboto" id="f1" value="Roboto"></div>
    <div><label class="field-label soft mini" for="f2">Tekster</label><input class="txt dark-edge in-serif" id="f2" value="Merriwealther"></div>
  </div>
</section>

<section class="section-box">
  <div class="sec-head"><span class="sec-icon"><svg class="line-icon" width="22" height="22"><use href="#i-smile"/></svg></span><div><h2 class="sec-title">Velkomstskærm</h2><p class="sec-sub">Vis et billede, mens din side indlæses.</p></div><button class="fold-btn" aria-label="Fold"><svg class="line-icon" width="12" height="12"><use href="#i-down"/></svg></button></div>
  <hr class="rule">
  <div class="welcome-row"><div class="img-frame"><span></span></div><button class="pill-btn go">Forhåndsvisning</button><button class="pill-btn">Slet</button></div>
</section>

<section class="section-box folded"><div class="sec-head"></div></section>
<section class="section-box folded"><div class="sec-head"><span class="sec-icon"><svg class="line-icon" width="23" height="23"><use href="#i-lock"/></svg></span><h2 class="sec-title d-flex align-items-center gap-2">Adgangskode <span class="help-dot">?</span></h2><button class="fold-btn" aria-label="Åbn"><svg class="line-icon" width="12" height="12"><use href="#i-right"/></svg></button></div></section>
<section class="section-box folded"><div class="sec-head"><span class="sec-icon"><svg class="line-icon" width="22" height="22"><use href="#i-folder"/></svg></span><div><h2 class="sec-title">Mappe</h2><p class="sec-sub">Link denne QR til en eksisterende eller en ny mappe.</p></div><button class="fold-btn" aria-label="Åbn"><svg class="line-icon" width="12" height="12"><use href="#i-right"/></svg></button></div></section>
</div>
</main>

<aside class="preview">
  <div class="toggle-pill"><button class="on">Forhåndsvisning</button><button>QR-kode</button></div>
  <div class="handset"><i class="side-key k1"></i><i class="side-key k2"></i><i class="side-key k3"></i><i class="side-key k4"></i>
    <div class="screen">
      <div class="status"><span>9:41</span><svg width="28" height="16" viewBox="0 0 28 16"><path d="M0 9h1.500v2H0zM2 8h1.500v3H2zM4 7h1.500v4H4zM6 6h1.500v5H6zM14 11l4-4q-4-3-8 0z"/><rect x="19" y="6" width="8" height="5" rx="1.500"/></svg></div>
      <div class="island"><i></i></div>
      <div class="mob-card mob-top"><svg width="25" height="25"><use href="#a-peanut"/></svg></div>
      <h2 class="mob-title">Vores sociale netværk</h2>
      <div class="mob-card mob-link"><svg width="34" height="34"><use href="#s-opentable"/></svg><div><strong>OpenTable</strong><small>Unit left term shoulder.</small></div><svg class="line-icon" width="13" height="9"><use href="#i-arrow"/></svg></div>
      <div class="mob-card mob-contact">
        <div class="mob-head"><i class="mob-square"><svg class="line-icon" width="17" height="17" viewBox="0 0 17 17"><rect x="1" y="2" width="6" height="5" rx="2"/><rect x="10" y="2" width="6" height="5" rx="2"/><rect x="1" y="10" width="6" height="5" rx="2"/><rect x="10" y="10" width="6" height="5" rx="2"/></svg></i>Kontakt</div>
        <div class="mob-row"><i class="mob-dot"><svg class="line-icon" width="13" height="13"><use href="#i-phone"/></svg></i><div><span>direction</span><b>713-729-7846</b></div></div>
        <div class="mob-row"><i class="mob-dot"><svg class="line-icon" width="13" height="12"><use href="#i-mail"/></svg></i><div><span>away</span><b>tgallegos@exa...</b></div></div>
      </div>
      <div class="home-bar"></div>
    </div>
  </div>
</aside>
</div>

<header class="nav-strip"><div class="site-width">
  <a class="brand" href="#"><svg width="28" height="29" viewBox="0 0 34 33"><g fill="url(#mint)"><rect width="15" height="15" rx="5"/><rect x="19" width="15" height="15" rx="5"/><rect y="18" width="15" height="15" rx="5"/><rect x="14.500" y="14" width="5" height="5" rx="1.500"/><rect x="20" y="20" width="8" height="8" rx="2"/><rect x="28" y="26" width="5" height="6" rx="1.500"/><rect x="30" y="18.500" width="3.500" height="3.500" rx="1"/><rect x="19" y="29" width="3.500" height="3.500" rx="1"/></g><g fill="#fff"><rect x="3.500" y="3.500" width="8" height="8" rx="2"/><rect x="22.500" y="3.500" width="8" height="8" rx="2"/><rect x="4" y="22" width="7" height="7" rx="2"/><rect x="22.500" y="22.500" width="3" height="3"/></g><g fill="#25d07a"><rect x="5.500" y="5.500" width="4" height="4" rx="1"/><rect x="24.500" y="5.500" width="4" height="4" rx="1"/></g></svg><span><em>Online</em><b>QRGenerator</b></span></a>
  <ol class="steps"><li><a href="#"><span class="num"><svg width="10" height="10" viewBox="0 0 10 10" fill="none" stroke="#fff" stroke-width="1.500"><path d="M1 5.500 4 8.500 9 2"/></svg></span>QR-kode type</a></li><li><svg width="34" height="8" viewBox="0 0 34 8" fill="#28c254"><path d="M0 3.500h28V1l6 3-6 3V4.500H0z"/></svg></li><li><a href="#"><span class="num">2</span>Indhold</a></li><li><svg width="34" height="8" viewBox="0 0 34 8" fill="#777c85"><path d="M28 1l6 3-6 3z"/><path d="M0 3.500h29v1H0z" fill="#1f1b33"/></svg></li><li class="later"><a href="#"><span class="num">3</span>QR design</a></li></ol>
  <div class="d-flex gap-2"><button class="sq plain" aria-label="Hjælp"><svg class="line-icon" width="18" height="18" viewBox="0 0 24 24"><path d="M7 2h10q5 0 5 5v7q0 5-5 5h-2l-4 4v-4H7q-5 0-5-5V7q0-5 5-5zM9.800 8.500q0-2.500 2.300-2.500t2.300 2.200q0 1.300-2.300 2.800v1M12 15v.3"/></svg></button><button class="sq burger" aria-label="Menu"><svg width="14" height="14" viewBox="0 0 14 14" stroke="#fff" stroke-width="1.500"><path d="M0 1.500h14M0 7h14M0 12.500h14"/></svg></button></div>
</div></header>

<footer class="foot-strip"><div class="site-width"><button class="foot-btn"><svg class="line-icon" width="16" height="10"><use href="#i-back"/></svg>Tilbage</button><button class="foot-btn next">Næste<svg class="line-icon bold" width="16" height="10"><use href="#i-arrow"/></svg></button></div></footer>
</div>

<script>
const fill = (id, html) => { document.getElementById(id).innerHTML = html; };
fill('swatches', ['#5279c8','#eaecf0','#d9eaf4','#b69edd','#7fc0a1','#edc472'].map((c, i) =>
  `<button class="swatch${i === 5 ? ' picked' : ''}" aria-label="${c}"><span><b style="background:${c}"></b></span></button>`).join(''));
fill('allergens', 'gluten crab egg fish peanut pea milk corn celery mustard sesame flask soy shell'.split(' ').map(n =>
  `<button class="${n === 'peanut' ? 'picked' : ''}" aria-label="${n}"><svg width="28" height="28"><use href="#a-${n}"/></svg></button>`).join(''));
fill('socials', 'web dribbble facebook flickr github gitlab google line linkedin pinterest reddit skype snap trip tumblr x vimeo vk xing youtube instagram tiktok whatsapp telegram messenger yelp uber postmates opentable spotify soundcloud music onlyfans doordash trust signal wechat'.split(' ').map(n =>
  `<button aria-label="${n}"><svg width="30" height="30"><use href="#s-${n}"/></svg></button>`).join(''));
const time = (label, value, hint) => `<div class="day-time"><svg class="line-icon" width="13" height="13"><use href="#i-clock"/></svg><input aria-label="${label}" value="${value}" placeholder="${hint}" disabled></div>`;
fill('days', ['Mandag','Tirsdag','Onsdag','Torsdag','Fredag','Lørdag','Søndag'].map((d, i) =>
  `<div class="day"><label class="day-name"><input class="form-check-input" type="checkbox">${d}</label>${time(d + ' fra', i ? '' : '08:00', i < 4 ? 'Fra' : 'From')}${time(d + ' til', i ? '' : '09:00', i < 4 ? 'Til' : 'To')}<button class="day-add" aria-label="Tilføj tid"><svg class="line-icon" width="12" height="12"><use href="#i-plus"/></svg></button></div>`).join(''));
</script>
<script src="https://cdn.jsdelivr.net/npm/bootstrap@5.3.0/dist/js/bootstrap.bundle.min.js"></script>
</body>
</html>
